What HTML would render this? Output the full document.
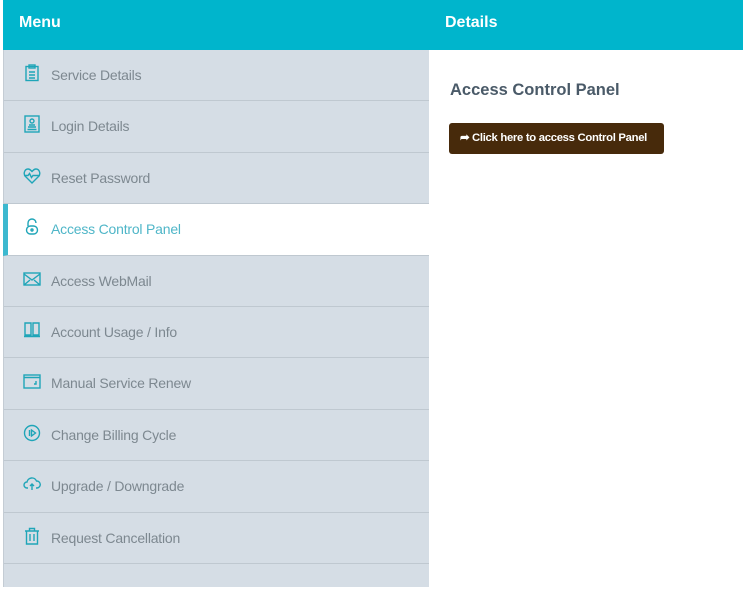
<!DOCTYPE html>
<html><head><style>
*{margin:0;padding:0;box-sizing:border-box}
body{width:743px;height:591px;background:#fff;font-family:"Liberation Sans",sans-serif;position:relative;overflow:hidden}
.hdr{position:absolute;top:0;left:3px;right:0;height:50px;background:#00b5cc;color:#fff;font-weight:bold;font-size:16px}
.hdr span{position:absolute;top:14px}
.left{position:absolute;left:3px;top:50px;width:426px;height:537px;background:#d5dde5;border-left:1px solid #c4ccd4}
.row{height:51.4px;border-bottom:1px solid #bfc8d0;position:relative;color:#7d8890;font-size:14px}
.row .t{position:absolute;left:47px;top:17px;letter-spacing:-0.2px}
.row svg{position:absolute;left:19px;top:14px;width:18px;height:18px;fill:none;stroke:#1fa5b8;stroke-width:1.4}
.row.act{background:#fff;border-left:5px solid #3cb8cf;margin-left:-1px}
.row.act .t{color:#4fb6c8;left:43px}
.row.act svg{left:15px}
h2{position:absolute;left:450px;top:81px;font-size:16.5px;color:#4a5a68;font-weight:bold}
.btn{position:absolute;left:449px;top:123px;width:215px;height:31px;background:#472a0b;border-radius:3px;color:#fff;font-size:11.3px;font-weight:bold;padding:8px 0 0 11px;letter-spacing:-0.3px;white-space:nowrap}
</style></head><body>
<div class="hdr"><span style="left:16px">Menu</span><span style="left:442px">Details</span></div>
<div class="left">
<div class="row"><svg viewBox="0 0 18 18"><rect x="3" y="2.5" width="12" height="14"/><rect x="6" y="1" width="6" height="3"/><path d="M6 8h6M6 11h6M6 14h6"/></svg><span class="t">Service Details</span></div>
<div class="row"><svg viewBox="0 0 18 18"><rect x="2" y="1" width="14" height="16"/><circle cx="9" cy="6" r="2"/><path d="M5 12h8M4.5 14.5h9M6 10h6"/></svg><span class="t">Login Details</span></div>
<div class="row"><svg viewBox="0 0 18 18"><path d="M9 16L2.5 9.5C0 7 1.5 2 5 2c2 0 3 1.5 4 2.5C10 3.5 11 2 13 2c3.5 0 5 5 2.5 7.5z"/><path d="M1 8.5h4l1.5-2 2 4 1.5-2h7"/></svg><span class="t">Reset Password</span></div>
<div class="row act"><svg viewBox="0 0 18 18"><path d="M5 8V5a4 4 0 0 1 8 0"/><rect x="3.5" y="8" width="11" height="8" rx="4"/><circle cx="9" cy="12" r="1"/></svg><span class="t">Access Control Panel</span></div>
<div class="row"><svg viewBox="0 0 18 18"><rect x="1" y="3" width="16" height="12"/><path d="M1 4l8 6 8-6M1 15l6-5M17 15l-6-5"/></svg><span class="t">Access WebMail</span></div>
<div class="row"><svg viewBox="0 0 18 18"><path d="M2 2h6v12H2zM10 2h6v12h-6zM1 15.5h16"/></svg><span class="t">Account Usage / Info</span></div>
<div class="row"><svg viewBox="0 0 18 18"><rect x="1" y="3" width="16" height="13"/><path d="M1 5.5h16M13 9v3h-2"/></svg><span class="t">Manual Service Renew</span></div>
<div class="row"><svg viewBox="0 0 18 18"><circle cx="9" cy="9" r="7.5"/><path d="M6.5 6v6M8.5 6l4 3-4 3z"/></svg><span class="t">Change Billing Cycle</span></div>
<div class="row"><svg viewBox="0 0 18 18"><path d="M5 13H4a3 3 0 0 1 0-6 5 5 0 0 1 9.5-1A3.5 3.5 0 0 1 14 13h-1M9 15V9M7 11l2-2 2 2"/></svg><span class="t">Upgrade / Downgrade</span></div>
<div class="row"><svg viewBox="0 0 18 18"><path d="M2 4h14M6.5 4V1.5h5V4M3.5 4v13h11V4M7 7v7M11 7v7"/></svg><span class="t">Request Cancellation</span></div>
</div>
<h2>Access Control Panel</h2>
<div class="btn">&#10150; Click here to access Control Panel</div>
</body></html>
